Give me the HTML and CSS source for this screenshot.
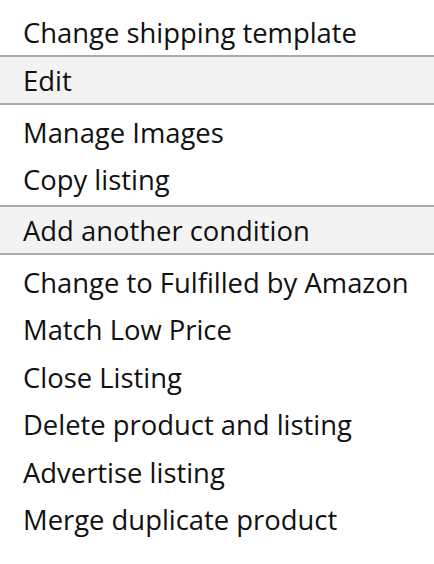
FILE: index.html
```html
<!DOCTYPE html>
<html>
<head>
<meta charset="utf-8">
<link rel="stylesheet" href="styles.css">
</head>
<body>
<div class="menu">
  <ul class="group first">
    <li class="item">Change shipping template</li>
  </ul>
  <ul class="group sep">
    <li class="item">Edit</li>
  </ul>
  <ul class="group plain">
    <li class="item">Manage Images</li>
    <li class="item">Copy listing</li>
  </ul>
  <ul class="group sep">
    <li class="item">Add another condition</li>
  </ul>
  <ul class="group plain">
    <li class="item">Change to Fulfilled by Amazon</li>
    <li class="item">Match Low Price</li>
    <li class="item">Close Listing</li>
    <li class="item">Delete product and listing</li>
    <li class="item">Advertise listing</li>
    <li class="item">Merge duplicate product</li>
  </ul>
</div>
</body>
</html>
```
FILE: styles.css
```css
html, body {
  margin: 0;
  padding: 0;
  background: #ffffff;
}
body {
  padding-top: 8px;
  font-family: "Open Sans", "Noto Sans", sans-serif;
  color: #111111;
}
.menu {
  display: flex;
  flex-direction: column;
}
.group {
  list-style: none;
  margin: 0;
  padding: 0;
}
.plain {
  padding: 2.5px 0;
}
.item {
  height: 47.5px;
  display: flex;
  align-items: center;
  padding-left: 23px;
  padding-top: 2px;
  box-sizing: border-box;
  font-size: 27.4px;
  line-height: 1;
  white-space: nowrap;
}
.first .item {
  height: 47px;
}
.sep {
  background: #f3f3f3;
  border-top: 2px solid #aaaaaa;
  border-bottom: 2px solid #aaaaaa;
}
.sep .item {
  height: 46px;
}
```
